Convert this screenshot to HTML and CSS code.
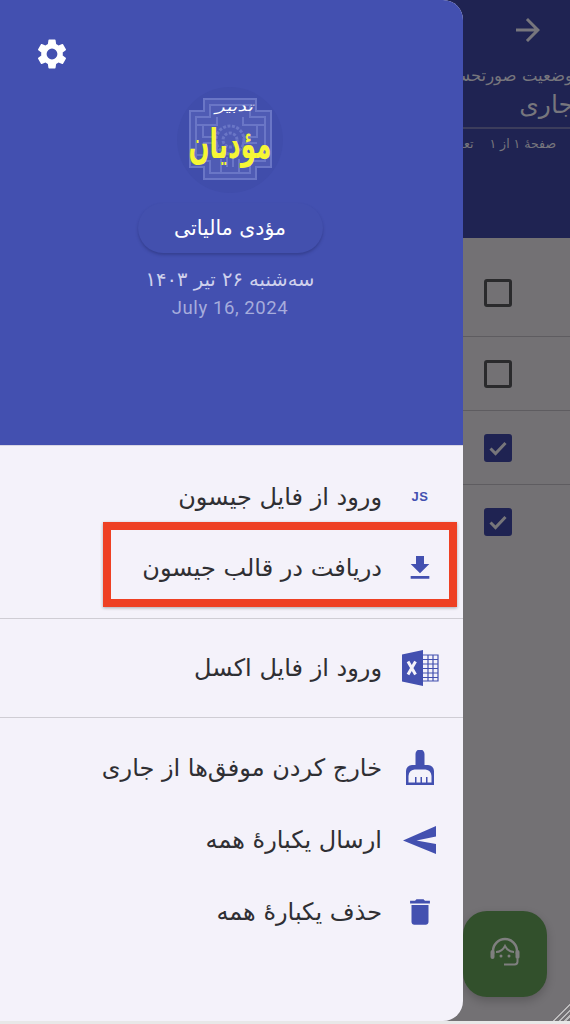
FILE: index.html
```html
<!DOCTYPE html>
<html lang="fa" dir="rtl">
<head>
  <meta charset="UTF-8" />
  <title>مؤدیان</title>
  <link rel="stylesheet" href="styles.css">
</head>
<body>

  <!-- صفحه پشت منو -->
  <div class="app">
    <header class="app-header">
      <svg class="back-icon" viewBox="0 0 24 24"><path d="M12 4l-1.410 1.410L16.170 11H4v2h12.170l-5.580 5.590L12 20l8-8z"/></svg>
      <div class="app-sub">وضعیت صورتحساب</div>
      <div class="app-title">جاری</div>
      <div class="app-line"></div>
      <div class="app-page"><span>صفحهٔ ۱ از ۱</span><span>تعداد</span></div>
    </header>
    <div class="app-list">
      <div class="app-row first"><span class="check"></span></div>
      <div class="app-row"><span class="check"></span></div>
      <div class="app-row"><span class="check on"><svg viewBox="0 0 24 24"><path d="M4.500 12.500l5 5L19.500 7" /></svg></span></div>
      <div class="app-row last"><span class="check on"><svg viewBox="0 0 24 24"><path d="M4.500 12.500l5 5L19.500 7" /></svg></span></div>
    </div>
    <div class="fab">
      <svg viewBox="0 0 36 36">
        <path class="fab-line" d="M6 18v-3a12 12 0 0 1 24 0v3"/>
        <path class="fab-line thin" d="M9 16c4 0 7-2 9-6 2 4 5 6 9 6"/>
        <rect x="3.500" y="14" width="4" height="9" rx="2"/>
        <rect x="28.500" y="14" width="4" height="9" rx="2"/>
        <circle cx="14" cy="20" r="1.500"/>
        <circle cx="22" cy="20" r="1.500"/>
        <path class="fab-line thin" d="M30.500 23v2.500a3 3 0 0 1-3 3H17"/>
      </svg>
    </div>
    <div class="hatch"></div>
  </div>

  <!-- منوی کشویی -->
  <aside class="drawer">
    <div class="drawer-head">
      <svg class="gear" viewBox="0 0 24 24"><path d="M19.140 12.940c.04-.3.06-.61.06-.94 0-.32-.02-.64-.07-.94l2.030-1.580a.49.49 0 0 0 .12-.61l-1.920-3.320a.488.488 0 0 0-.59-.22l-2.390.96c-.5-.38-1.030-.7-1.620-.94l-.36-2.540a.484.484 0 0 0-.48-.41h-3.840c-.24 0-.43.17-.47.41l-.36 2.540c-.59.24-1.130.57-1.620.94l-2.390-.96c-.22-.08-.47 0-.59.22L2.740 8.870c-.12.21-.08.47.12.61l2.030 1.580c-.05.3-.09.63-.09.94s.02.64.07.94l-2.030 1.580a.49.49 0 0 0-.12.61l1.920 3.320c.12.22.37.29.59.22l2.390-.96c.5.38 1.030.7 1.620.94l.36 2.540c.05.24.24.41.48.41h3.840c.24 0 .44-.17.47-.41l.36-2.540c.59-.24 1.130-.56 1.620-.94l2.390.96c.22.08.47 0 .59-.22l1.920-3.320c.12-.22.07-.47-.12-.61l-2.010-1.580zM12 15.600A3.600 3.600 0 1 1 12 8.400a3.600 3.600 0 0 1 0 7.200z"/></svg>

      <div class="logo">
        <svg viewBox="0 0 106 106">
          <circle cx="53" cy="53" r="53" fill="#404dab"/>
          <path class="maze-fill" d="M27 12h52v12h15v56H79v12H27V80H13V24h14z"/>
          <path class="maze" d="M27 12h52v12h15v56H79v12H27V80H13V24h14z"/>
          <path class="maze" d="M33 18h40v12h15v44H73v12H33V74H19V30h14z"/>
          <path class="maze" d="M40 30v8H26v12h14M66 30v8h14v12H66M26 56h14v12M80 56H66v12M44 86V72M62 86V72M50 80V70M56 80V70M20 38h6M80 38h8M20 68h6M80 68h8"/>
          <circle class="sun" cx="53" cy="53" r="14"/>
          <circle class="sun" cx="53" cy="53" r="7"/>
          <text class="logo-top" transform="translate(57 24) scale(1.500 1)" text-anchor="middle">تدبیر</text>
          <text class="logo-main" transform="translate(53 71) scale(.88 1.450)" text-anchor="middle">مؤدیان</text>
        </svg>
      </div>

      <div class="name-pill">مؤدی مالیاتی</div>
      <p class="date-fa">سه‌شنبه ۲۶ تیر ۱۴۰۳</p>
      <p class="date-en" dir="ltr">July 16, 2024</p>
    </div>

    <div class="menu">
      <div class="menu-group g1">
        <div class="menu-item">
          <span class="icon"><span class="js" dir="ltr">JS</span></span>
          <span>ورود از فایل جیسون</span>
        </div>
        <div class="menu-item">
          <span class="icon"><svg viewBox="0 0 24 24" width="32" height="32"><path d="M19 9h-4V3H9v6H5l7 7 7-7zM5 18v2h14v-2H5z"/></svg></span>
          <span>دریافت در قالب جیسون</span>
        </div>
      </div>
      <div class="menu-group g2">
        <div class="menu-item">
          <span class="icon">
            <svg viewBox="0 0 38 38" width="38" height="38">
              <path d="M1 5.500L22 1v36L1 32.500z"/>
              <path class="grid" d="M22 6h15v26H22M22 10.500h15M22 15h15M22 19.500h15M22 24h15M22 28.500h15M27 6v26M32 6v26"/>
              <path class="x-mark" d="M7 12.500l7.500 13M14.500 12.500L7 25.500"/>
            </svg>
          </span>
          <span>ورود از فایل اکسل</span>
        </div>
      </div>
      <div class="menu-group g3">
        <div class="menu-item">
          <span class="icon">
            <svg viewBox="0 0 30 36" width="30" height="36">
              <path d="M10.500 4a4.500 4.500 0 0 1 9 0V15h3.500a6 6 0 0 1 6 6v14H1V21a6 6 0 0 1 6-6h3.500z"/>
              <path class="broom-cut" d="M3.500 32.500V26a7 7 0 0 1 6-6.500h11a7 7 0 0 1 6 6.500v6.500h-4v-5.500h-1.500v5.500h-4v-5.500h-1.500v5.500h-4v-5.500H10v5.500z"/>
            </svg>
          </span>
          <span>خارج کردن موفق‌ها از جاری</span>
        </div>
        <div class="menu-item">
          <span class="icon">
            <svg viewBox="0 0 34 28" width="34" height="28"><path d="M0 14.500L33 0v10.500L13.500 14.500 33 18v10z"/></svg>
          </span>
          <span>ارسال یکبارهٔ همه</span>
        </div>
        <div class="menu-item">
          <span class="icon"><svg viewBox="0 0 24 24" width="34" height="34"><path d="M6 19c0 1.100.9 2 2 2h8c1.100 0 2-.9 2-2V7H6v12zM19 4h-3.500l-1-1h-5l-1 1H5v2h14V4z"/></svg></span>
          <span>حذف یکبارهٔ همه</span>
        </div>
      </div>
    </div>
  </aside>

  <!-- کادر قرمز روی گزینه دوم -->
  <div class="red-box"></div>

</body>
</html>
```

FILE: styles.css
```css
/* Reset */
* {
  margin: 0;
  padding: 0;
  box-sizing: border-box;
}
html, body {
  width: 570px;
  height: 1024px;
  overflow: hidden;
}
body {
  position: relative;
  background-color: #e8e8e8;
  font-family: "DejaVu Sans", "Noto Sans", sans-serif;
}

/* Page behind the drawer */
.app {
  position: relative;
  height: 1021px;
  background-color: #737174;
  overflow: hidden;
}
.app-header {
  height: 238px;
  background-color: #1f2352;
  color: #77767d;
  display: flex;
  flex-direction: column;
  padding-top: 12px;
  white-space: nowrap;
}
.back-icon {
  width: 36px;
  height: 36px;
  fill: #77767d;
  margin-right: 24px;
}
.app-sub {
  font-size: 16.500px;
  line-height: 22px;
  margin-top: 17px;
  margin-right: -3px;
}
.app-title {
  font-size: 25px;
  line-height: 32px;
  margin-top: 2px;
  margin-right: -4px;
}
.app-line {
  height: 2px;
  margin-top: 6px;
  background-color: #3c3d5c;
}
.app-page {
  display: flex;
  gap: 16px;
  margin-top: 7px;
  margin-right: 14px;
  font-size: 12.500px;
}
.app-row {
  height: 74px;
  margin-left: 11px;
  padding-right: 58px;
  display: flex;
  align-items: center;
  border-bottom: 1px solid #5e5c60;
}
.app-row.first {
  height: 99px;
  padding-top: 12px;
}
.app-row.last {
  border-bottom: 0;
}
.check {
  width: 28px;
  height: 28px;
  border: 3px solid #2a2a2c;
  border-radius: 3px;
}
.check.on {
  background-color: #1f2352;
  border-color: #1f2352;
  border-width: 2px;
}
.check svg {
  display: block;
  fill: none;
  stroke: #77767a;
  stroke-width: 3;
}

/* Floating support button */
.fab {
  position: absolute;
  left: 463px;
  top: 911px;
  width: 84px;
  height: 86px;
  background-color: #32502c;
  border-radius: 24px;
  box-shadow: 0 4px 10px rgba(0,0,0,0.2);
  display: flex;
  align-items: center;
  justify-content: center;
}
.fab svg {
  width: 36px;
  height: 36px;
  fill: #7f7f7f;
}
.fab-line {
  fill: none;
  stroke: #7f7f7f;
  stroke-width: 2.500;
}
.fab-line.thin {
  stroke-width: 2;
}
.hatch {
  position: absolute;
  right: 0;
  bottom: 0;
  width: 20px;
  height: 20px;
  background: repeating-linear-gradient(135deg, #bdbcbd 0 1.500px, transparent 1.500px 4px);
  clip-path: polygon(100% 0, 100% 100%, 0 100%);
}

/* Drawer */
.drawer {
  position: absolute;
  left: 0;
  top: 0;
  width: 463px;
  height: 1021px;
  background-color: #f4f2fa;
  border-radius: 0 20px 20px 0;
  overflow: hidden;
  display: flex;
  flex-direction: column;
}
.drawer-head {
  position: relative;
  height: 446px;
  flex-shrink: 0;
  background-color: #4350b0;
  border-bottom: 1px solid #d8d6e4;
  display: flex;
  flex-direction: column;
  align-items: center;
  padding-top: 87px;
  padding-right: 3px;
  color: #fff;
}
.gear {
  position: absolute;
  left: 34px;
  top: 36px;
  width: 36px;
  height: 36px;
  fill: #fff;
}
.logo {
  width: 106px;
  height: 106px;
}
.logo svg {
  display: block;
}
.maze-fill {
  fill: #4f5bb4;
}
.maze {
  fill: none;
  stroke: #6a76c6;
  stroke-width: 2;
}
.sun {
  fill: none;
  stroke: #6a76c6;
  stroke-width: 3;
  stroke-dasharray: 3 1.500;
}
.logo-top {
  fill: #fff;
  font-size: 13px;
  font-style: italic;
  font-family: "DejaVu Sans", sans-serif;
}
.logo-main {
  fill: #f6f635;
  font-size: 28px;
  font-weight: 700;
  font-family: "DejaVu Sans", sans-serif;
}
.name-pill {
  width: 185px;
  height: 50px;
  margin-top: 10px;
  border-radius: 25px;
  background-color: #4350ae;
  box-shadow: 0 2px 3px rgba(30,35,90,0.35);
  font-size: 20.500px;
  display: flex;
  align-items: center;
  justify-content: center;
}
.date-fa {
  margin-top: 14px;
  font-size: 19.500px;
  line-height: 26px;
  color: #cfd1ec;
}
.date-en {
  margin-top: 3px;
  font-family: Roboto, sans-serif;
  font-size: 18.500px;
  line-height: 24px;
  letter-spacing: 0.6px;
  color: #a6acdc;
}

/* Menu */
.menu-group {
  border-bottom: 1px solid #cfcdd4;
}
.menu-group.g1 {
  padding: 15px 0 15px;
}
.menu-group.g2 {
  padding: 13px 0 14px;
}
.menu-group.g3 {
  padding-top: 14px;
  border-bottom: 0;
}
.menu-item {
  height: 71px;
  padding-right: 23px;
  display: flex;
  align-items: center;
  gap: 18px;
  font-size: 24px;
  color: #2f2f33;
  white-space: nowrap;
}
.g3 .menu-item {
  height: 72px;
}
.icon {
  width: 40px;
  height: 40px;
  flex-shrink: 0;
  display: flex;
  align-items: center;
  justify-content: center;
}
.icon svg {
  fill: #4350b0;
  display: block;
}
.js {
  font-family: "Liberation Sans", sans-serif;
  font-weight: 700;
  font-size: 13px;
  letter-spacing: 0.5px;
  color: #4350b0;
}
.x-mark {
  fill: none;
  stroke: #f4f2fa;
  stroke-width: 3;
}
.icon svg .grid {
  fill: #f4f2fa;
  stroke: #4350b0;
  stroke-width: 1.200;
}
.icon svg .broom-cut {
  fill: #f4f2fa;
}

/* Red highlight box */
.red-box {
  position: absolute;
  left: 103px;
  top: 522px;
  width: 354px;
  height: 85px;
  border: 8px solid #ee4023;
  box-shadow: 0 1px 3px rgba(0,0,0,0.3);
}
```
